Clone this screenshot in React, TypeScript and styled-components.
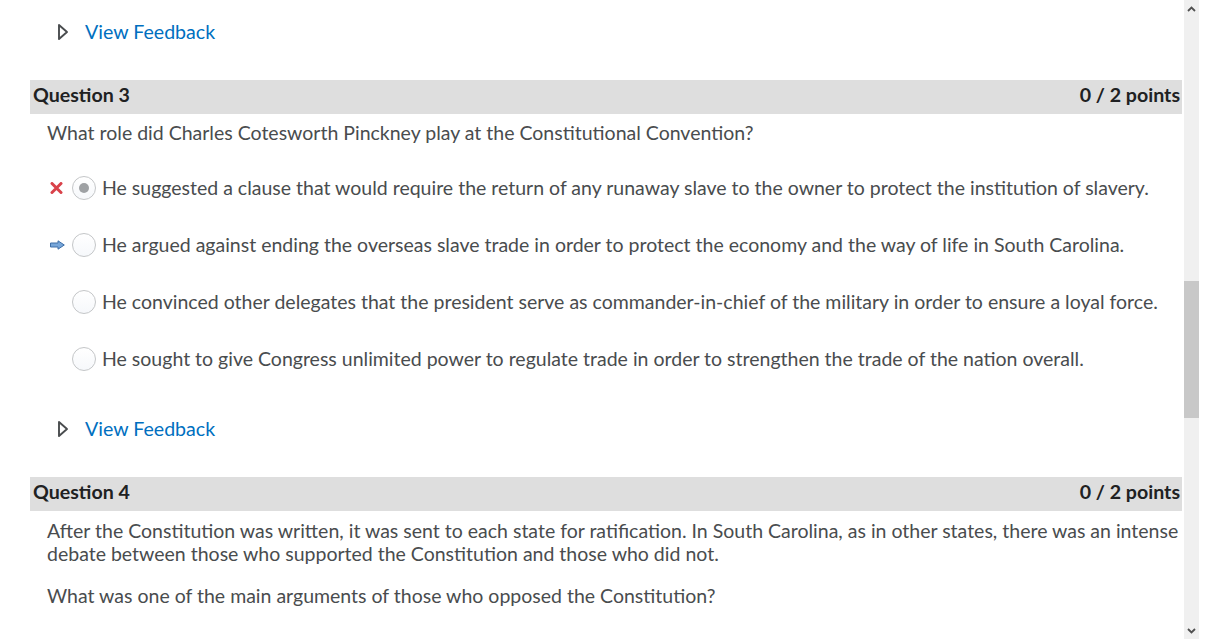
import React from "react";
import styled, { createGlobalStyle } from "styled-components";

const GlobalStyle = createGlobalStyle`
  html, body { margin: 0; padding: 0; background: #ffffff; }
  body { font-family: Lato, "Open Sans", sans-serif; color: #494c4e; }
  * { box-sizing: border-box; }
`;

const Page = styled.div`
  display: flex;
  width: 1229px;
  height: 639px;
  overflow: hidden;
  background: #ffffff;
`;

const Content = styled.div`
  width: 1184px;
  flex: none;
  padding: 0 2px 0 30px;
  display: flex;
  flex-direction: column;
`;

const FeedbackRow = styled.div<{ $top: number }>`
  display: flex;
  align-items: center;
  height: 24px;
  margin-top: ${(p) => p.$top}px;
  padding-left: 27px;
  gap: 16px;
`;

const FeedbackLink = styled.a`
  color: #006fbf;
  font-size: 19.6px;
  text-decoration: none;
  line-height: 24px;
`;

const QuestionHeader = styled.div<{ $top: number }>`
  display: flex;
  justify-content: space-between;
  align-items: center;
  height: 34px;
  margin-top: ${(p) => p.$top}px;
  padding: 0 2px 5px 3px;
  background: #dedede;
  color: #202122;
  font-weight: 700;
  font-size: 19.6px;
  line-height: 24px;
`;

const Prompt = styled.p<{ $top: number }>`
  margin: ${(p) => p.$top}px 0 0 0;
  padding-left: 17px;
  font-size: 19.5px;
  line-height: 23px;
  color: #494c4e;
`;

const OptionList = styled.div`
  display: flex;
  flex-direction: column;
  margin-top: 15px;
`;

const OptionRow = styled.div`
  display: flex;
  align-items: center;
  height: 57px;
  padding-left: 20px;
`;

const IconSlot = styled.span`
  width: 20px;
  height: 24px;
  display: flex;
  align-items: center;
  flex: none;
`;

const Radio = styled.span<{ $checked?: boolean }>`
  width: 24px;
  height: 24px;
  border-radius: 50%;
  border: 1px solid #c4c6c8;
  background: linear-gradient(#ffffff, #f6f8fb);
  margin-left: 2px;
  margin-right: 6px;
  flex: none;
  display: flex;
  align-items: center;
  justify-content: center;
  &::after {
    content: "";
    display: ${(p) => (p.$checked ? "block" : "none")};
    width: 10px;
    height: 10px;
    border-radius: 50%;
    background: #9ea1a4;
  }
`;

const OptionText = styled.span`
  font-size: 19.5px;
  line-height: 24px;
  color: #494c4e;
`;

const ScrollTrack = styled.div`
  width: 15px;
  flex: none;
  height: 639px;
  background: #f0f0f0;
  display: flex;
  flex-direction: column;
  align-items: center;
`;

const ScrollArrow = styled.div`
  width: 15px;
  height: 17px;
  display: flex;
  align-items: center;
  justify-content: center;
  flex: none;
`;

const ScrollSpacer = styled.div<{ $h: number }>`
  height: ${(p) => p.$h}px;
  flex: none;
`;

const ScrollFill = styled.div`
  flex: 1;
`;

const ScrollThumb = styled.div`
  width: 15px;
  height: 137px;
  background: #c8c8c8;
  flex: none;
`;

const Triangle = () => (
  <svg width="12" height="18" viewBox="0 0 12 18">
    <path d="M2 2 L10 9 L2 16 Z" fill="none" stroke="#494c4e" strokeWidth="1.9" strokeLinejoin="round" />
  </svg>
);

const WrongIcon = () => (
  <svg width="13" height="12" viewBox="0 0 13 12">
    <path d="M2 1.5 L11 10.5 M11 1.5 L2 10.5" stroke="#d9424a" strokeWidth="3" strokeLinecap="round" />
  </svg>
);

const CorrectArrow = () => (
  <svg width="15" height="10" viewBox="0 0 15 10">
    <path d="M0.5 3 H8 V0.8 L14.3 5 L8 9.2 V7 H0.5 Z" fill="#77a6d9" stroke="#3f6fa8" strokeWidth="1" strokeLinejoin="round" />
  </svg>
);

const Chevron = ({ up }: { up?: boolean }) => (
  <svg width="9" height="6" viewBox="0 0 9 6">
    <path d={up ? "M1 5 L4.5 1.5 L8 5" : "M1 1 L4.5 4.5 L8 1"} fill="none" stroke="#505050" strokeWidth="1.8" />
  </svg>
);

const Feedback = ({ top }: { top: number }) => (
  <FeedbackRow $top={top}>
    <Triangle />
    <FeedbackLink href="#">View Feedback</FeedbackLink>
  </FeedbackRow>
);

const options = [
  {
    text: "He suggested a clause that would require the return of any runaway slave to the owner to protect the institution of slavery.",
    icon: "wrong",
    checked: true,
  },
  {
    text: "He argued against ending the overseas slave trade in order to protect the economy and the way of life in South Carolina.",
    icon: "correct",
    checked: false,
  },
  {
    text: "He convinced other delegates that the president serve as commander-in-chief of the military in order to ensure a loyal force.",
    icon: "",
    checked: false,
  },
  {
    text: "He sought to give Congress unlimited power to regulate trade in order to strengthen the trade of the nation overall.",
    icon: "",
    checked: false,
  },
];

export default function App() {
  return (
    <>
      <GlobalStyle />
      <Page>
        <Content>
          <Feedback top={20} />
          <QuestionHeader $top={36}>
            <span>Question 3</span>
            <span>0 / 2 points</span>
          </QuestionHeader>
          <Prompt $top={7}>
            What role did Charles Cotesworth Pinckney play at the Constitutional Convention?
          </Prompt>
          <OptionList>
            {options.map((o) => (
              <OptionRow key={o.text}>
                <IconSlot>
                  {o.icon === "wrong" && <WrongIcon />}
                  {o.icon === "correct" && <CorrectArrow />}
                </IconSlot>
                <Radio $checked={o.checked} />
                <OptionText>{o.text}</OptionText>
              </OptionRow>
            ))}
          </OptionList>
          <Feedback top={30} />
          <QuestionHeader $top={36}>
            <span>Question 4</span>
            <span>0 / 2 points</span>
          </QuestionHeader>
          <Prompt $top={8}>
            After the Constitution was written, it was sent to each state for ratification. In South Carolina, as in other states, there was an intense debate between those who supported the Constitution and those who did not.
          </Prompt>
          <Prompt $top={19}>What was one of the main arguments of those who opposed the Constitution?</Prompt>
        </Content>
        <ScrollTrack>
          <ScrollArrow>
            <Chevron up />
          </ScrollArrow>
          <ScrollSpacer $h={264} />
          <ScrollThumb />
          <ScrollFill />
          <ScrollArrow>
            <Chevron />
          </ScrollArrow>
        </ScrollTrack>
      </Page>
    </>
  );
}
